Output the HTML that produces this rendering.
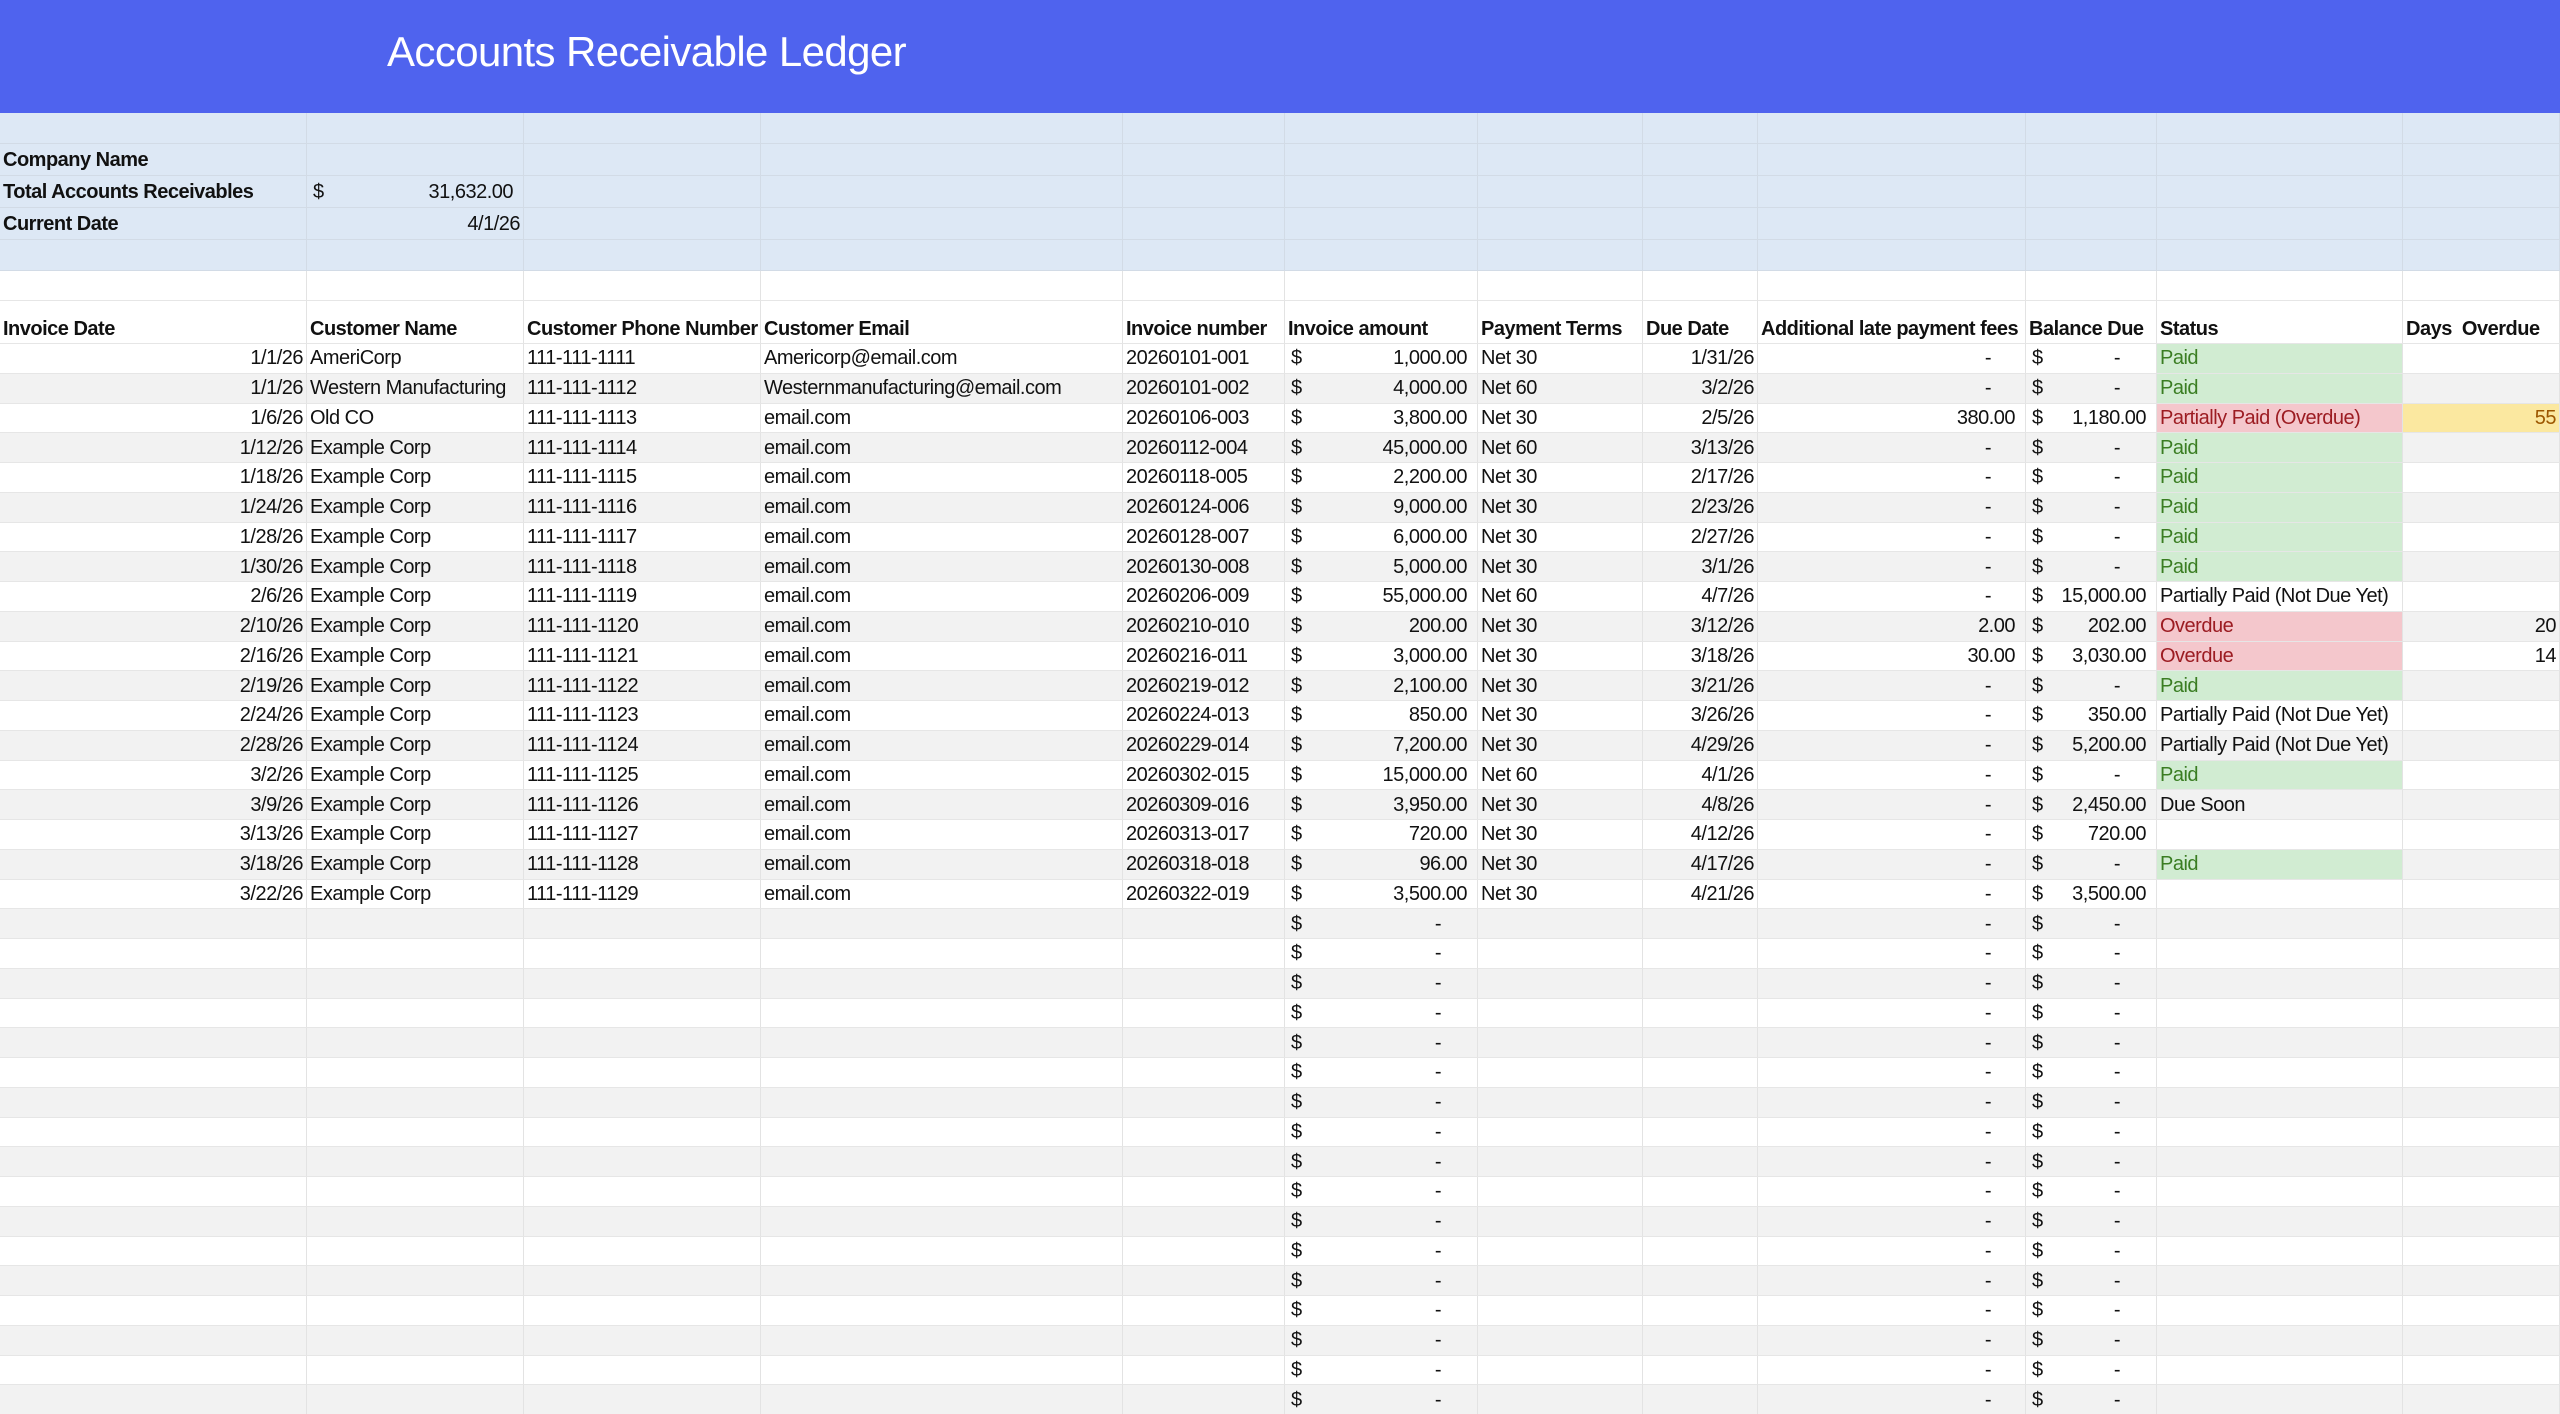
<!DOCTYPE html>
<html><head><meta charset="utf-8"><style>
*{box-sizing:border-box;margin:0;padding:0}
html,body{width:2560px;height:1414px;overflow:hidden}
body{background:#fff;font-family:"Liberation Sans",sans-serif;font-size:20px;letter-spacing:-0.5px;color:#111;position:relative}
.ban{height:113px;background:#4f63ee;position:relative}
.ban span{position:absolute;left:387px;top:28px;color:#fff;font-size:42px;letter-spacing:-0.6px}
.row{display:grid;grid-template-columns:307px 217px 237px 362px 162px 193px 165px 115px 268px 131px 246px 157px;grid-template-rows:100%;height:29.75px;overflow:hidden;line-height:22px}
.row>div{border-right:1px solid #e3e3e3;border-bottom:1px solid #e6e6e6;white-space:nowrap;overflow:visible;padding:0 3px;display:flex;align-items:center;min-height:0;height:100%}
.b>div{background:#dde8f5;border-color:#d2dbe6}
.g>div{background:#f2f2f2}
.h{height:43px}.h>div{align-items:flex-end;padding-bottom:3px;font-weight:bold}
.r{justify-content:flex-end}
.m{justify-content:space-between;padding:0 10px 0 6px!important}
.m.z{padding-right:36px!important}
.f{justify-content:flex-end;padding-right:10px!important}
.f.z{padding-right:34px!important}
.P{background:#d1ecd2!important;color:#3a7d22}
.O{background:#f4c7cc!important;color:#9c1c22}
.Y{background:#fbe8a0!important;color:#9c5700}
b{font-weight:bold}
</style></head><body>
<div class="ban"><span>Accounts Receivable Ledger</span></div>
<div class="row b" style="height:31px"><div></div><div></div><div></div><div></div><div></div><div></div><div></div><div></div><div></div><div></div><div></div><div></div></div>
<div class="row b" style="height:32px"><div><b>Company Name</b></div><div></div><div></div><div></div><div></div><div></div><div></div><div></div><div></div><div></div><div></div><div></div></div>
<div class="row b" style="height:32px"><div><b>Total Accounts Receivables</b></div><div class="m"><span>$</span><span>31,632.00</span></div><div></div><div></div><div></div><div></div><div></div><div></div><div></div><div></div><div></div><div></div></div>
<div class="row b" style="height:32px"><div><b>Current Date</b></div><div class="r">4/1/26</div><div></div><div></div><div></div><div></div><div></div><div></div><div></div><div></div><div></div><div></div></div>
<div class="row b" style="height:31px"><div></div><div></div><div></div><div></div><div></div><div></div><div></div><div></div><div></div><div></div><div></div><div></div></div>
<div class="row" style="height:30px"><div></div><div></div><div></div><div></div><div></div><div></div><div></div><div></div><div></div><div></div><div></div><div></div></div>
<div class="row h"><div>Invoice Date</div><div>Customer Name</div><div>Customer Phone Number</div><div>Customer Email</div><div>Invoice number</div><div>Invoice amount</div><div>Payment Terms</div><div>Due Date</div><div>Additional late payment fees</div><div>Balance Due</div><div>Status</div><div>Days&nbsp; Overdue</div></div>

<div class="row"><div class="r">1/1/26</div><div>AmeriCorp</div><div>111-111-1111</div><div>Americorp@email.com</div><div>20260101-001</div><div class="m"><span>$</span><span>1,000.00</span></div><div>Net 30</div><div class="r">1/31/26</div><div class="f z">-</div><div class="m z"><span>$</span><span>-</span></div><div class="P">Paid</div><div></div></div>
<div class="row g"><div class="r">1/1/26</div><div>Western Manufacturing</div><div>111-111-1112</div><div>Westernmanufacturing@email.com</div><div>20260101-002</div><div class="m"><span>$</span><span>4,000.00</span></div><div>Net 60</div><div class="r">3/2/26</div><div class="f z">-</div><div class="m z"><span>$</span><span>-</span></div><div class="P">Paid</div><div></div></div>
<div class="row"><div class="r">1/6/26</div><div>Old CO</div><div>111-111-1113</div><div>email.com</div><div>20260106-003</div><div class="m"><span>$</span><span>3,800.00</span></div><div>Net 30</div><div class="r">2/5/26</div><div class="f">380.00</div><div class="m"><span>$</span><span>1,180.00</span></div><div class="O">Partially Paid (Overdue)</div><div class="r Y">55</div></div>
<div class="row g"><div class="r">1/12/26</div><div>Example Corp</div><div>111-111-1114</div><div>email.com</div><div>20260112-004</div><div class="m"><span>$</span><span>45,000.00</span></div><div>Net 60</div><div class="r">3/13/26</div><div class="f z">-</div><div class="m z"><span>$</span><span>-</span></div><div class="P">Paid</div><div></div></div>
<div class="row"><div class="r">1/18/26</div><div>Example Corp</div><div>111-111-1115</div><div>email.com</div><div>20260118-005</div><div class="m"><span>$</span><span>2,200.00</span></div><div>Net 30</div><div class="r">2/17/26</div><div class="f z">-</div><div class="m z"><span>$</span><span>-</span></div><div class="P">Paid</div><div></div></div>
<div class="row g"><div class="r">1/24/26</div><div>Example Corp</div><div>111-111-1116</div><div>email.com</div><div>20260124-006</div><div class="m"><span>$</span><span>9,000.00</span></div><div>Net 30</div><div class="r">2/23/26</div><div class="f z">-</div><div class="m z"><span>$</span><span>-</span></div><div class="P">Paid</div><div></div></div>
<div class="row"><div class="r">1/28/26</div><div>Example Corp</div><div>111-111-1117</div><div>email.com</div><div>20260128-007</div><div class="m"><span>$</span><span>6,000.00</span></div><div>Net 30</div><div class="r">2/27/26</div><div class="f z">-</div><div class="m z"><span>$</span><span>-</span></div><div class="P">Paid</div><div></div></div>
<div class="row g"><div class="r">1/30/26</div><div>Example Corp</div><div>111-111-1118</div><div>email.com</div><div>20260130-008</div><div class="m"><span>$</span><span>5,000.00</span></div><div>Net 30</div><div class="r">3/1/26</div><div class="f z">-</div><div class="m z"><span>$</span><span>-</span></div><div class="P">Paid</div><div></div></div>
<div class="row"><div class="r">2/6/26</div><div>Example Corp</div><div>111-111-1119</div><div>email.com</div><div>20260206-009</div><div class="m"><span>$</span><span>55,000.00</span></div><div>Net 60</div><div class="r">4/7/26</div><div class="f z">-</div><div class="m"><span>$</span><span>15,000.00</span></div><div>Partially Paid (Not Due Yet)</div><div></div></div>
<div class="row g"><div class="r">2/10/26</div><div>Example Corp</div><div>111-111-1120</div><div>email.com</div><div>20260210-010</div><div class="m"><span>$</span><span>200.00</span></div><div>Net 30</div><div class="r">3/12/26</div><div class="f">2.00</div><div class="m"><span>$</span><span>202.00</span></div><div class="O">Overdue</div><div class="r">20</div></div>
<div class="row"><div class="r">2/16/26</div><div>Example Corp</div><div>111-111-1121</div><div>email.com</div><div>20260216-011</div><div class="m"><span>$</span><span>3,000.00</span></div><div>Net 30</div><div class="r">3/18/26</div><div class="f">30.00</div><div class="m"><span>$</span><span>3,030.00</span></div><div class="O">Overdue</div><div class="r">14</div></div>
<div class="row g"><div class="r">2/19/26</div><div>Example Corp</div><div>111-111-1122</div><div>email.com</div><div>20260219-012</div><div class="m"><span>$</span><span>2,100.00</span></div><div>Net 30</div><div class="r">3/21/26</div><div class="f z">-</div><div class="m z"><span>$</span><span>-</span></div><div class="P">Paid</div><div></div></div>
<div class="row"><div class="r">2/24/26</div><div>Example Corp</div><div>111-111-1123</div><div>email.com</div><div>20260224-013</div><div class="m"><span>$</span><span>850.00</span></div><div>Net 30</div><div class="r">3/26/26</div><div class="f z">-</div><div class="m"><span>$</span><span>350.00</span></div><div>Partially Paid (Not Due Yet)</div><div></div></div>
<div class="row g"><div class="r">2/28/26</div><div>Example Corp</div><div>111-111-1124</div><div>email.com</div><div>20260229-014</div><div class="m"><span>$</span><span>7,200.00</span></div><div>Net 30</div><div class="r">4/29/26</div><div class="f z">-</div><div class="m"><span>$</span><span>5,200.00</span></div><div>Partially Paid (Not Due Yet)</div><div></div></div>
<div class="row"><div class="r">3/2/26</div><div>Example Corp</div><div>111-111-1125</div><div>email.com</div><div>20260302-015</div><div class="m"><span>$</span><span>15,000.00</span></div><div>Net 60</div><div class="r">4/1/26</div><div class="f z">-</div><div class="m z"><span>$</span><span>-</span></div><div class="P">Paid</div><div></div></div>
<div class="row g"><div class="r">3/9/26</div><div>Example Corp</div><div>111-111-1126</div><div>email.com</div><div>20260309-016</div><div class="m"><span>$</span><span>3,950.00</span></div><div>Net 30</div><div class="r">4/8/26</div><div class="f z">-</div><div class="m"><span>$</span><span>2,450.00</span></div><div>Due Soon</div><div></div></div>
<div class="row"><div class="r">3/13/26</div><div>Example Corp</div><div>111-111-1127</div><div>email.com</div><div>20260313-017</div><div class="m"><span>$</span><span>720.00</span></div><div>Net 30</div><div class="r">4/12/26</div><div class="f z">-</div><div class="m"><span>$</span><span>720.00</span></div><div></div><div></div></div>
<div class="row g"><div class="r">3/18/26</div><div>Example Corp</div><div>111-111-1128</div><div>email.com</div><div>20260318-018</div><div class="m"><span>$</span><span>96.00</span></div><div>Net 30</div><div class="r">4/17/26</div><div class="f z">-</div><div class="m z"><span>$</span><span>-</span></div><div class="P">Paid</div><div></div></div>
<div class="row"><div class="r">3/22/26</div><div>Example Corp</div><div>111-111-1129</div><div>email.com</div><div>20260322-019</div><div class="m"><span>$</span><span>3,500.00</span></div><div>Net 30</div><div class="r">4/21/26</div><div class="f z">-</div><div class="m"><span>$</span><span>3,500.00</span></div><div></div><div></div></div>

<div class="row g"><div></div><div></div><div></div><div></div><div></div><div class="m z"><span>$</span><span>-</span></div><div></div><div></div><div class="f z">-</div><div class="m z"><span>$</span><span>-</span></div><div></div><div></div></div>
<div class="row"><div></div><div></div><div></div><div></div><div></div><div class="m z"><span>$</span><span>-</span></div><div></div><div></div><div class="f z">-</div><div class="m z"><span>$</span><span>-</span></div><div></div><div></div></div>
<div class="row g"><div></div><div></div><div></div><div></div><div></div><div class="m z"><span>$</span><span>-</span></div><div></div><div></div><div class="f z">-</div><div class="m z"><span>$</span><span>-</span></div><div></div><div></div></div>
<div class="row"><div></div><div></div><div></div><div></div><div></div><div class="m z"><span>$</span><span>-</span></div><div></div><div></div><div class="f z">-</div><div class="m z"><span>$</span><span>-</span></div><div></div><div></div></div>
<div class="row g"><div></div><div></div><div></div><div></div><div></div><div class="m z"><span>$</span><span>-</span></div><div></div><div></div><div class="f z">-</div><div class="m z"><span>$</span><span>-</span></div><div></div><div></div></div>
<div class="row"><div></div><div></div><div></div><div></div><div></div><div class="m z"><span>$</span><span>-</span></div><div></div><div></div><div class="f z">-</div><div class="m z"><span>$</span><span>-</span></div><div></div><div></div></div>
<div class="row g"><div></div><div></div><div></div><div></div><div></div><div class="m z"><span>$</span><span>-</span></div><div></div><div></div><div class="f z">-</div><div class="m z"><span>$</span><span>-</span></div><div></div><div></div></div>
<div class="row"><div></div><div></div><div></div><div></div><div></div><div class="m z"><span>$</span><span>-</span></div><div></div><div></div><div class="f z">-</div><div class="m z"><span>$</span><span>-</span></div><div></div><div></div></div>
<div class="row g"><div></div><div></div><div></div><div></div><div></div><div class="m z"><span>$</span><span>-</span></div><div></div><div></div><div class="f z">-</div><div class="m z"><span>$</span><span>-</span></div><div></div><div></div></div>
<div class="row"><div></div><div></div><div></div><div></div><div></div><div class="m z"><span>$</span><span>-</span></div><div></div><div></div><div class="f z">-</div><div class="m z"><span>$</span><span>-</span></div><div></div><div></div></div>
<div class="row g"><div></div><div></div><div></div><div></div><div></div><div class="m z"><span>$</span><span>-</span></div><div></div><div></div><div class="f z">-</div><div class="m z"><span>$</span><span>-</span></div><div></div><div></div></div>
<div class="row"><div></div><div></div><div></div><div></div><div></div><div class="m z"><span>$</span><span>-</span></div><div></div><div></div><div class="f z">-</div><div class="m z"><span>$</span><span>-</span></div><div></div><div></div></div>
<div class="row g"><div></div><div></div><div></div><div></div><div></div><div class="m z"><span>$</span><span>-</span></div><div></div><div></div><div class="f z">-</div><div class="m z"><span>$</span><span>-</span></div><div></div><div></div></div>
<div class="row"><div></div><div></div><div></div><div></div><div></div><div class="m z"><span>$</span><span>-</span></div><div></div><div></div><div class="f z">-</div><div class="m z"><span>$</span><span>-</span></div><div></div><div></div></div>
<div class="row g"><div></div><div></div><div></div><div></div><div></div><div class="m z"><span>$</span><span>-</span></div><div></div><div></div><div class="f z">-</div><div class="m z"><span>$</span><span>-</span></div><div></div><div></div></div>
<div class="row"><div></div><div></div><div></div><div></div><div></div><div class="m z"><span>$</span><span>-</span></div><div></div><div></div><div class="f z">-</div><div class="m z"><span>$</span><span>-</span></div><div></div><div></div></div>
<div class="row g"><div></div><div></div><div></div><div></div><div></div><div class="m z"><span>$</span><span>-</span></div><div></div><div></div><div class="f z">-</div><div class="m z"><span>$</span><span>-</span></div><div></div><div></div></div>
<div class="row"><div></div><div></div><div></div><div></div><div></div><div class="m z"><span>$</span><span>-</span></div><div></div><div></div><div class="f z">-</div><div class="m z"><span>$</span><span>-</span></div><div></div><div></div></div>
</body></html>
